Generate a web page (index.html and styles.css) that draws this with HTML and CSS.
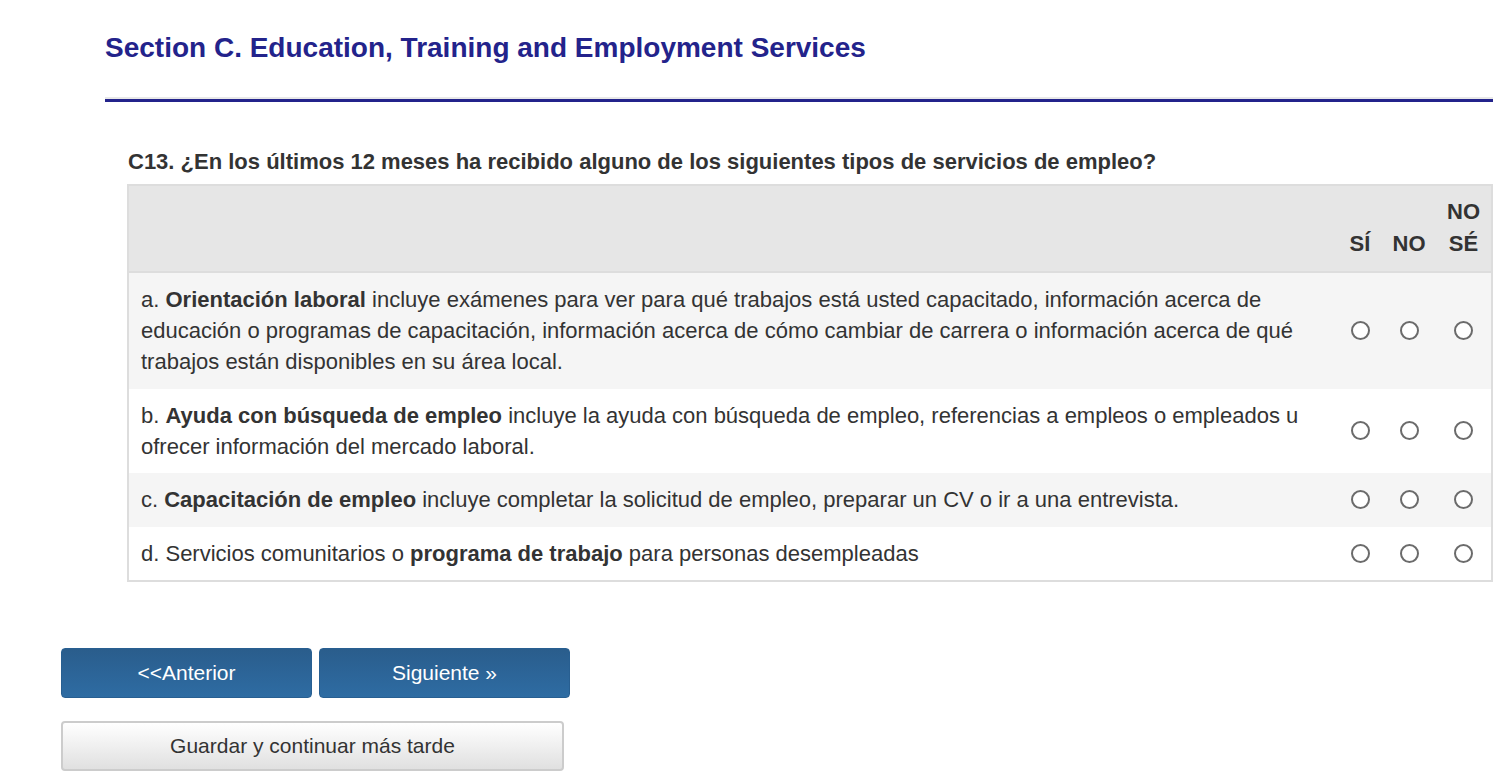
FILE: index.html
```html
<!DOCTYPE html>
<html lang="es">
<head>
  <meta charset="UTF-8" />
  <meta name="viewport" content="width=device-width, initial-scale=1.0"/>
  <title>Section C. Education, Training and Employment Services</title>
  <link rel="stylesheet" href="styles.css">
</head>
<body>

  <main class="page">

    <section class="survey">
      <h1 class="section-title">Section C. Education, Training and Employment Services</h1>
      <div class="title-rule"></div>

      <h2 class="question">C13. ¿En los últimos 12 meses ha recibido alguno de los siguientes tipos de servicios de empleo?</h2>

      <table class="grid">
        <colgroup>
          <col />
          <col class="col-si" />
          <col class="col-no" />
          <col class="col-ns" />
        </colgroup>
        <thead>
          <tr>
            <th></th>
            <th>SÍ</th>
            <th>NO</th>
            <th>NO SÉ</th>
          </tr>
        </thead>
        <tbody>
          <tr>
            <td class="item">a. <b>Orientación laboral</b> incluye exámenes para ver para qué trabajos está usted capacitado, información acerca de educación o programas de capacitación, información acerca de cómo cambiar de carrera o información acerca de qué trabajos están disponibles en su área local.</td>
            <td><input type="radio" name="c13a" /></td>
            <td><input type="radio" name="c13a" /></td>
            <td><input type="radio" name="c13a" /></td>
          </tr>
          <tr>
            <td class="item">b. <b>Ayuda con búsqueda de empleo</b> incluye la ayuda con búsqueda de empleo, referencias a empleos o empleados u ofrecer información del mercado laboral.</td>
            <td><input type="radio" name="c13b" /></td>
            <td><input type="radio" name="c13b" /></td>
            <td><input type="radio" name="c13b" /></td>
          </tr>
          <tr>
            <td class="item">c. <b>Capacitación de empleo</b> incluye completar la solicitud de empleo, preparar un CV o ir a una entrevista.</td>
            <td><input type="radio" name="c13c" /></td>
            <td><input type="radio" name="c13c" /></td>
            <td><input type="radio" name="c13c" /></td>
          </tr>
          <tr>
            <td class="item">d. Servicios comunitarios o <b>programa de trabajo</b> para personas desempleadas</td>
            <td><input type="radio" name="c13d" /></td>
            <td><input type="radio" name="c13d" /></td>
            <td><input type="radio" name="c13d" /></td>
          </tr>
        </tbody>
      </table>
    </section>

    <div class="nav-buttons">
      <button type="button" class="btn btn-primary">&lt;&lt;Anterior</button>
      <button type="button" class="btn btn-primary">Siguiente &raquo;</button>
    </div>

    <button type="button" class="btn btn-save">Guardar y continuar más tarde</button>

  </main>

</body>
</html>
```

FILE: styles.css
```css
body {
  font-family: "Liberation Sans", Arial, sans-serif;
  margin: 0;
  padding: 0;
  background: #fff;
  color: #333;
}

.page {
  padding-left: 61px;
}

.survey {
  margin-left: 44px;
  width: 1388px;
}

.section-title {
  margin: 0;
  padding-top: 32px;
  font-size: 28px;
  line-height: 32px;
  color: #23238b;
}

.title-rule {
  margin-top: 33px;
  border-top: 2px solid #e8e8e8;
  border-bottom: 3px solid #23238b;
}

.question {
  margin: 47px 0 9px 23px;
  font-size: 22px;
  line-height: 26px;
  color: #333;
}

.grid {
  margin-left: 22px;
  width: 1366px;
  table-layout: fixed;
  border-collapse: separate;
  border-spacing: 0;
  border: 2px solid #ddd;
  font-size: 22px;
}

.col-si {
  width: 44px;
}

.col-no {
  width: 54px;
}

.col-ns {
  width: 55px;
}

.grid th {
  background: #e6e6e6;
  border-bottom: 2px solid #ddd;
  padding: 10px 0 11px;
  line-height: 32px;
  vertical-align: bottom;
  text-align: center;
  font-weight: bold;
}

.grid td {
  padding: 11px 0 11.5px;
  line-height: 31px;
  text-align: center;
  vertical-align: middle;
}

.grid td.item {
  text-align: left;
  padding-left: 12px;
  padding-right: 12px;
}

.grid tbody tr:nth-child(odd) td {
  background: #f5f5f5;
}

.grid input[type="radio"] {
  appearance: none;
  -webkit-appearance: none;
  display: block;
  margin: 0 auto;
  width: 19px;
  height: 19px;
  border: 2px solid #6b6b6b;
  border-radius: 50%;
  background: #fff;
}

.nav-buttons {
  display: flex;
  gap: 7px;
  margin-top: 66px;
}

.btn {
  font-family: "Liberation Sans", Arial, sans-serif;
  font-size: 21px;
  height: 50px;
  border-radius: 4px;
  cursor: pointer;
}

.btn-primary {
  width: 251px;
  color: #fff;
  background: linear-gradient(#2a5d8c, #2e6ca3);
  border: 1px solid #285f91;
}

.btn-save {
  display: block;
  margin-top: 23px;
  width: 503px;
  color: #333;
  background: linear-gradient(#ffffff, #e0e0e0);
  border: 2px solid #ccc;
}
```
